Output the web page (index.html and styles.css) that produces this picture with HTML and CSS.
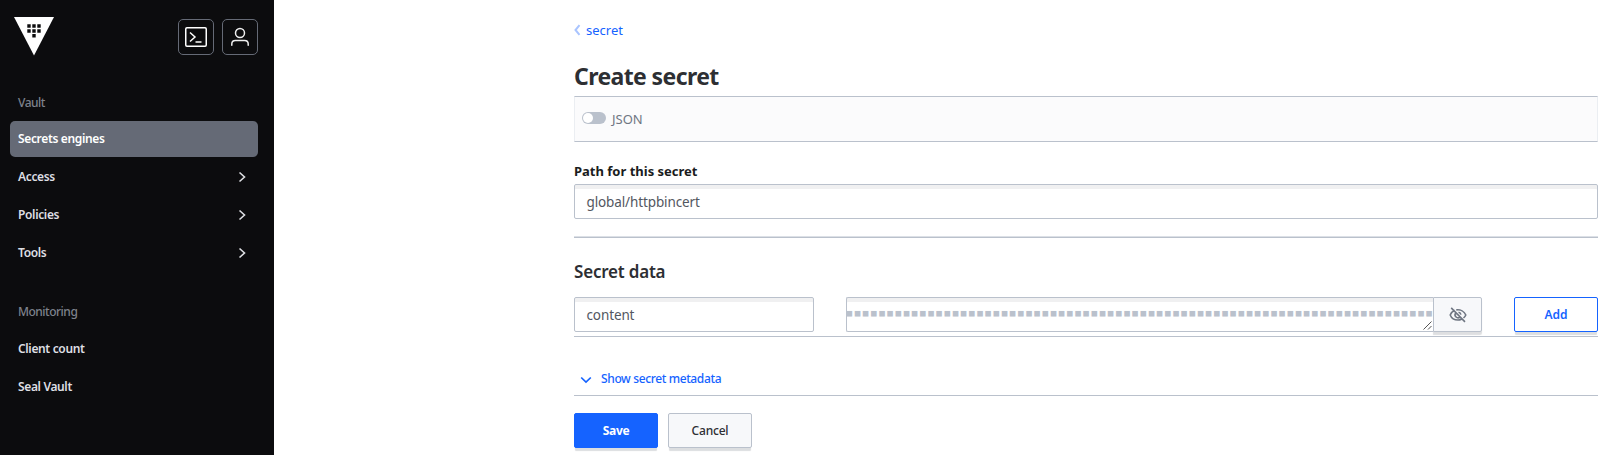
FILE: index.html
```html
<!DOCTYPE html>
<html lang="en">
<head>
<meta charset="utf-8">
<title>Vault</title>
<link rel="stylesheet" href="styles.css">
</head>
<body>
<div class="app">
  <aside class="sidebar">
    <header class="side-head">
      <svg class="logo" width="40" height="39" viewBox="0 0 40 39"><path fill="#fff" d="M0 0h40L20 38.500z"/><path fill="#0c0c0e" d="M13.300 7.300h3.400v3.400h-3.400zM18.300 7.300h3.400v3.400h-3.400zM23.300 7.300h3.400v3.400h-3.400zM13.300 12.300h3.400v3.400h-3.400zM18.300 12.300h3.400v3.400h-3.400zM23.300 12.300h3.400v3.400h-3.400zM18.300 17h3.400v3.400h-3.400z"/></svg>
      <div class="side-actions">
        <button class="icon-btn" aria-label="Console"><svg width="24" height="24" viewBox="0 0 24 24" fill="none" stroke="#fff" stroke-width="1.500"><rect x="1.750" y="2.750" width="20.500" height="18.500" rx="1.200"/><path d="M6 7.500l5 4.500-5 4.500M11.500 17h6"/></svg></button>
        <button class="icon-btn" aria-label="User"><svg width="24" height="24" viewBox="0 0 24 24" fill="none" stroke="#efeff0" stroke-width="1.500" stroke-linecap="round"><circle cx="12" cy="8" r="4.500"/><path d="M3.800 20.200V19c0-2 1.600-3.500 3.600-3.500h9.200c2 0 3.600 1.500 3.600 3.500v1.200"/></svg></button>
      </div>
    </header>
    <nav class="nav">
      <div class="nav-title">Vault</div>
      <a class="nav-item active"><span>Secrets engines</span></a>
      <a class="nav-item"><span>Access</span><svg class="chev" width="16" height="16" viewBox="0 0 16 16"><path d="M5.500 3.500L10.500 8l-5 4.500"/></svg></a>
      <a class="nav-item"><span>Policies</span><svg class="chev" width="16" height="16" viewBox="0 0 16 16"><path d="M5.500 3.500L10.500 8l-5 4.500"/></svg></a>
      <a class="nav-item"><span>Tools</span><svg class="chev" width="16" height="16" viewBox="0 0 16 16"><path d="M5.500 3.500L10.500 8l-5 4.500"/></svg></a>
      <div class="nav-title second">Monitoring</div>
      <a class="nav-item"><span>Client count</span></a>
      <a class="nav-item"><span>Seal Vault</span></a>
    </nav>
  </aside>
  <main class="main">
    <a class="crumb"><svg width="8" height="12" viewBox="0 0 8 12"><path d="M5.500 1.200L1.500 6l4 4.800" fill="none" stroke="#a9c4ff" stroke-width="2"/></svg><span>secret</span></a>
    <h1 class="title">Create secret</h1>
    <div class="toolbar"><span class="switch"></span><span class="switch-label">JSON</span></div>
    <label class="label">Path for this secret</label>
    <div class="input path">global/httpbincert</div>
    <hr class="rule">
    <h2 class="subtitle">Secret data</h2>
    <div class="row">
      <div class="input key">content</div>
      <div class="secret">
        <div class="input value"><span class="mask">■■■■■■■■■■■■■■■■■■■■■■■■■■■■■■■■■■■■■■■■■■■■■■■■■■■■■■■■■■■■■■■■■■■■■■■■</span><svg class="grip" width="9" height="9" viewBox="0 0 9 9"><path d="M.5 8.500l8-8M5 8.500L8.500 5" fill="none" stroke="#555"/></svg></div>
        <button class="eye" aria-label="Show value"><svg width="18" height="16" viewBox="0 0 18 16" fill="none" stroke="#6f7682" stroke-width="1.600"><path d="M5.700 3.200C3.500 4.300 1.900 6.200 1.200 8c1.200 3 4.300 5 7.800 5 1.300 0 2.400-.3 3.500-.8M7.300 2.900c4.100-.6 8 1.600 9.500 5.100-.5 1.200-1.300 2.200-2.300 3M6.600 6.100a3 3 0 0 0 4.400 4M9.500 5.200a3 3 0 0 1 2.400 2.500M2.200.9l13.800 14"/></svg></button>
      </div>
      <button class="btn add">Add</button>
    </div>
    <div class="meta"><svg width="12" height="8" viewBox="0 0 12 8"><path d="M1.200 1.500L6 6l4.800-4.500" fill="none" stroke="#1563ff" stroke-width="1.700"/></svg><span>Show secret metadata</span></div>
    <div class="actions"><button class="btn save">Save</button><button class="btn cancel">Cancel</button></div>
  </main>
</div>
</body>
</html>
```
FILE: styles.css
```css
* { box-sizing: border-box; }
body { margin: 0; background: #fff; font-family: "Noto Sans", "Open Sans", sans-serif; font-size: 14px; color: #535761; overflow: hidden; }
button { font-family: inherit; padding: 0; }
svg { display: block; flex: none; }
.app { display: flex; height: 455px; }
.sidebar { width: 274px; flex: none; background: #0c0c0e; padding: 17px 16px 0 10px; }
.side-head { display: flex; justify-content: space-between; height: 72px; padding-left: 4px; }
.side-actions { display: flex; gap: 8px; padding-top: 2px; }
.icon-btn { width: 36px; height: 36px; display: grid; place-items: center; background: none; border: 1px solid #656a76; border-radius: 5px; }
.nav { display: flex; flex-direction: column; gap: 2px; }
.nav-title { height: 30px; line-height: 27px; padding-left: 8px; font-size: 12px; font-weight: 500; letter-spacing: -.5px; color: #7e828c; }
.nav-title.second { margin-top: 25px; height: 31px; line-height: 28px; }
.nav-item { height: 36px; display: flex; align-items: center; justify-content: space-between; padding: 0 8px; border-radius: 5px; font-size: 12px; font-weight: 600; letter-spacing: -.35px; color: #dedfe3; }
.nav-item span { margin-top: -1px; }
.nav-item.active { background: #656a76; color: #fff; }
.chev { fill: none; stroke: #dedfe3; stroke-width: 1.600; }
.main { flex: none; width: 1024px; margin-left: 300px; display: flex; flex-direction: column; }
.crumb { display: flex; align-items: center; gap: 4px; height: 20px; margin-top: 20px; color: #1563ff; font-size: 13px; }
.title { margin: 20px 0 0; height: 36px; line-height: 32px; font-size: 23px; font-weight: 700; color: #2d2f33; letter-spacing: -.6px; }
.toolbar { height: 46px; display: flex; align-items: flex-start; gap: 6px; padding: 15px 7px 0; background: #fbfbfc; border: 1px solid #ebeef2; border-top-color: #bac1cc; border-bottom-color: #bac1cc; }
.switch { width: 24px; height: 12px; border-radius: 6px; background: #bac1cc; padding: 1px; }
.switch::before { content: ""; display: block; width: 10px; height: 10px; border-radius: 50%; background: #fff; }
.switch-label { line-height: 15px; font-size: 13px; color: #6f7682; }
.label { margin-top: 19px; height: 23px; line-height: 20px; font-size: 13px; font-weight: 700; color: #1a1c20; }
.input { height: 35px; border: 1px solid #bac1cc; border-radius: 2px; background: #fff; box-shadow: inset 0 4px 0 #f0f0f1; padding-left: 11.500px; line-height: 34px; font-size: 13.500px; letter-spacing: -.12px; color: #535761; }
.rule { width: 100%; height: 2px; margin: 17px 0 0; border: 0; border-top: 1px solid #dce0e6; background: #bac1cc; }
.subtitle { margin: 20px 0 0; height: 39px; line-height: 27px; font-size: 17px; font-weight: 600; letter-spacing: -.2px; color: #2d2f33; }
.row { display: flex; height: 40px; border-bottom: 1px solid #bac1cc; }
.key { width: 240px; margin-right: 32px; }
.secret { display: flex; width: 636px; margin-right: 32px; }
.value { position: relative; width: 587px; padding: 0; overflow: hidden; white-space: nowrap; border-right: 0; border-radius: 2px 0 0 2px; }
.mask { display: block; margin-left: -1px; font-family: "Liberation Mono", monospace; font-size: 11.500px; letter-spacing: 1.265px; line-height: 31px; color: #bac1cc; }
.grip { position: absolute; right: 1px; bottom: 1px; }
.eye { width: 49px; height: 35px; display: grid; place-items: center; background: #f7f8fa; border: 1px solid #bac1cc; border-radius: 0 2px 2px 0; box-shadow: 0 3px 1px #dedfe1; }
.btn { width: 84px; height: 35px; border: 1px solid #bac1cc; border-radius: 2px; font-size: 12px; font-weight: 600; box-shadow: 0 4px 1px -1px #dcdee0; }
.add { background: #fff; border-color: #1563ff; color: #1563ff; }
.meta { height: 59px; display: flex; align-items: flex-start; gap: 9px; padding: 33px 0 0 6px; border-bottom: 1px solid #bac1cc; color: #1563ff; font-size: 12px; font-weight: 500; letter-spacing: -.37px; line-height: 18px; }
.meta svg { margin-top: 6px; }
.actions { display: flex; gap: 10px; margin-top: 17px; }
.save { background: #1563ff; border-color: #1563ff; color: #fff; font-weight: 700; letter-spacing: -.3px; }
.cancel { background: #f7f8fa; color: #2d2f33; font-weight: 500; letter-spacing: -.2px; }
```
